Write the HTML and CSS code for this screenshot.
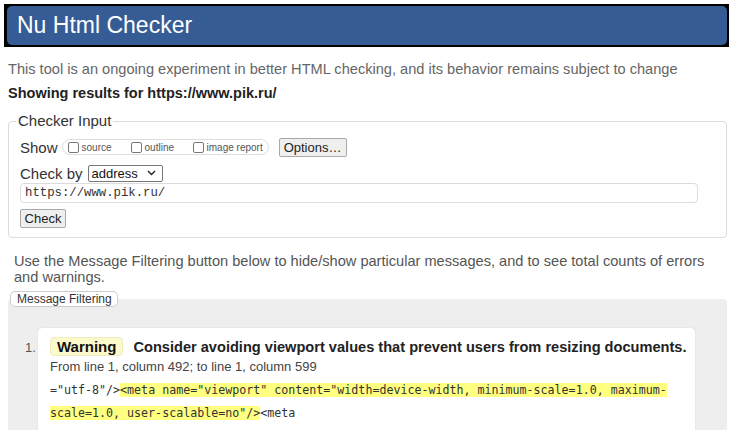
FILE: index.html
```html
<!DOCTYPE html>
<html>
<head>
<meta charset="utf-8">
<link rel="stylesheet" href="styles.css">
</head>
<body>
<header class="masthead"><h1 class="title">Nu Html Checker</h1></header>
<p class="tagline">This tool is an ongoing experiment in better HTML checking, and its behavior remains subject to change</p>
<p class="showing">Showing results for https://www.pik.ru/</p>
<fieldset class="input-box">
  <legend class="input-legend">Checker Input</legend>
  <div class="row show-row">
    <span class="row-label">Show</span>
    <span class="pill">
      <span class="opt opt-source"><span class="cb"></span><span class="opt-text">source</span></span>
      <span class="opt opt-outline"><span class="cb"></span><span class="opt-text">outline</span></span>
      <span class="opt"><span class="cb"></span><span class="opt-text">image report</span></span>
    </span>
    <span class="btn options">Options…</span>
  </div>
  <div class="row by-row">
    <span class="row-label">Check by</span>
    <span class="select">address<svg class="chev" width="9" height="6" viewBox="0 0 9 6"><path d="M1 1l3.5 3.5L8 1" fill="none" stroke="#222" stroke-width="1.4"/></svg></span>
  </div>
  <div class="url">https://www.pik.ru/</div>
  <span class="btn check">Check</span>
</fieldset>
<p class="filter-note">Use the Message Filtering button below to hide/show particular messages, and to see total counts of errors and warnings.</p>
<fieldset class="results">
  <legend class="filter-btn">Message Filtering</legend>
  <ol class="messages">
    <li class="msg">
      <p class="msg-head"><span class="badge">Warning</span><span class="msg-title">Consider avoiding viewport values that prevent users from resizing documents.</span></p>
      <p class="loc">From line 1, column 492; to line 1, column 599</p>
      <p class="extract"><code>="utf-8"/&gt;<mark class="hl">&lt;meta name="viewport" content="width=device-width, minimum-scale=1.0, maximum-<br>scale=1.0, user-scalable=no"/&gt;</mark>&lt;meta</code></p>
    </li>
  </ol>
</fieldset>
</body>
</html>
```
FILE: styles.css
```css
html, body { margin: 0; padding: 0; background: #fff; }
body { font-family: "Liberation Sans", Arial, sans-serif; color: #222; width: 730px; height: 430px; overflow: hidden; }

.masthead { margin: 4px 1px 0 4px; height: 43px; box-sizing: border-box; background: #000; padding: 2px 2px 2px 3px; }
.title { margin: 0; height: 39px; line-height: 39px; background: #365c96; border-radius: 5px; color: #fff; font-weight: normal; font-size: 23px; padding-left: 10px; }

.tagline { margin: 13px 0 0 8px; font-size: 14.6px; line-height: 18px; color: #666; }
.showing { margin: 6px 0 0 8px; font-size: 14.5px; line-height: 18px; font-weight: bold; color: #222; }

.input-box { margin: 10px 3px 0 8px; border: 1px solid #dcdcdc; border-radius: 4px; padding: 7px 11px 9px 11px; min-width: 0; }
.input-legend { margin-left: -4px; padding: 0 2px; font-size: 15px; line-height: 18px; color: #333; }

.row { display: flex; align-items: center; height: 20px; }
.by-row { margin-top: 6px; }
.row-label { font-size: 15px; color: #333; margin-right: 4px; }
.pill { display: flex; align-items: center; height: 16px; box-sizing: border-box; border: 1px solid #ddd; border-radius: 8px; padding: 0 4px 0 5px; width: 207px; }
.opt { display: flex; align-items: center; white-space: nowrap; }
.opt-source { width: 63px; }
.opt-outline { width: 62px; }
.cb { flex: none; width: 11px; height: 11px; box-sizing: border-box; border: 1px solid #777; border-radius: 2px; background: #fff; margin-right: 3px; }
.opt-text { font-size: 10px; color: #555; }
.btn { display: inline-flex; align-items: center; justify-content: center; box-sizing: border-box; background: #efefef; border: 1px solid #a9a9a9; border-radius: 2px; font-size: 13px; color: #222; }
.options { width: 68px; height: 19px; margin-left: 10px; }
.select { display: inline-flex; align-items: center; justify-content: space-between; box-sizing: border-box; width: 75px; height: 17px; border: 1px solid #767676; border-radius: 2px; padding: 0 6px 0 3px; font-size: 13px; color: #111; margin-left: 1px; }
.chev { display: block; }
.url { width: 678px; height: 20px; box-sizing: border-box; border: 1px solid #dcdcdc; border-radius: 4px; padding-left: 4px; font-family: "Liberation Mono", monospace; font-size: 12.3px; line-height: 18px; color: #333; }
.check { width: 46px; height: 19px; margin-top: 6px; }

.filter-note { margin: 15px 0 0 14px; width: 705px; font-size: 14.6px; line-height: 16px; color: #555; }

.results { margin: 6px 3px 0 8px; border: none; background: #eee; border-radius: 4px; padding: 0; min-width: 0; height: 145px; overflow: hidden; }
.filter-btn { margin-left: 2px; padding: 0 5px 0 6px; height: 16px; box-sizing: border-box; background: #fff; border: 1px solid #ccc; border-radius: 5px; font-size: 12px; line-height: 14px; color: #333; }

.messages { margin: 21px 0 0 0; padding: 0 0 0 30px; list-style: none; counter-reset: m; }
.msg { position: relative; width: 657px; box-sizing: border-box; background: #fff; border-radius: 4px; box-shadow: 0 0 1px rgba(0,0,0,0.25); padding: 9px 12px 20px 12px; counter-increment: m; }
.msg::before { content: counter(m) "."; position: absolute; left: -13px; top: 12px; font-size: 13px; color: #555; }
.msg-head { margin: 0; display: flex; align-items: center; height: 19px; }
.badge { display: inline-flex; align-items: center; height: 19px; box-sizing: border-box; padding: 0 6px; background: #fcf9cd; border: 1px solid #efecc0; border-radius: 4px; font-weight: bold; font-size: 15px; color: #111; margin-right: 10px; }
.msg-title { font-weight: bold; font-size: 14.6px; color: #222; white-space: nowrap; }
.loc { margin: 2px 0 0 0; font-size: 13px; line-height: 17px; color: #444; }
.extract { margin: 3px 0 0 0; line-height: 21px; }
.extract code { font-family: "DejaVu Sans Mono", monospace; font-size: 11.65px; color: #333; }
.hl { background: #ffff80; color: #333; }
```
